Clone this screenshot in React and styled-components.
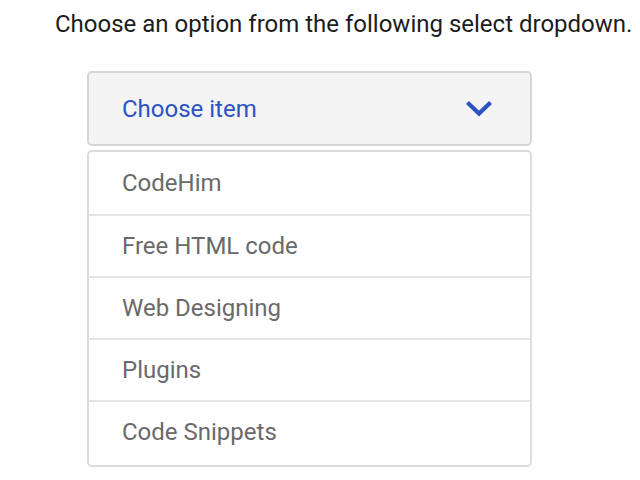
import React from "react";
import styled, { createGlobalStyle } from "styled-components";

const Global = createGlobalStyle`
  html, body { margin: 0; padding: 0; background: #fff; }
  body { font-family: Roboto, "Noto Sans", sans-serif; }
`;

const Page = styled.div`
  padding: 8px 0 0 0;
`;

const Title = styled.h1`
  margin: 0 0 0 55px;
  font-size: 24px;
  font-weight: 400;
  line-height: 32px;
  color: #1c1c1c;
  white-space: nowrap;
`;

const Select = styled.div`
  margin: 31px 0 0 87px;
  width: 445px;
  display: flex;
  flex-direction: column;
  gap: 4px;
`;

const Header = styled.div`
  box-sizing: border-box;
  height: 75px;
  display: flex;
  align-items: center;
  justify-content: space-between;
  padding: 0 38px 0 33px;
  background: #f4f4f4;
  border: 2px solid #d6d6d6;
  border-radius: 5px;
  color: #2d52c4;
  font-size: 24px;
`;

const List = styled.ul`
  list-style: none;
  margin: 0;
  padding: 0 0 3px 0;
  border: 2px solid #dcdcdc;
  border-radius: 5px;
  background: #fff;
`;

const Item = styled.li`
  box-sizing: border-box;
  height: 62px;
  display: flex;
  align-items: center;
  padding-left: 33px;
  font-size: 24px;
  color: #6a6a6a;
  & + & { border-top: 2px solid #e4e4e4; }
`;

const Chevron = () => (
  <svg width="26" height="16" viewBox="0 0 26 16" aria-hidden="true">
    <path d="M3 3 L13 12.5 L23 3" fill="none" stroke="#2d52c4" strokeWidth="4.2" strokeLinecap="square" strokeLinejoin="miter" />
  </svg>
);

const items = ["CodeHim", "Free HTML code", "Web Designing", "Plugins", "Code Snippets"];

export default function App() {
  return (
    <Page>
      <Global />
      <Title>Choose an option from the following select dropdown.</Title>
      <Select>
        <Header>
          <span>Choose item</span>
          <Chevron />
        </Header>
        <List>
          {items.map((t) => (
            <Item key={t}>{t}</Item>
          ))}
        </List>
      </Select>
    </Page>
  );
}
